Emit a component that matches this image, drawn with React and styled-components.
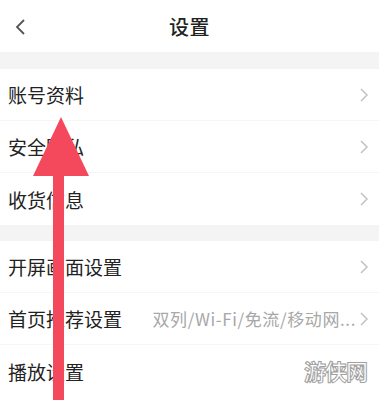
import React from 'react'
import styled, { createGlobalStyle } from 'styled-components'

const GlobalStyle = createGlobalStyle`
  body {
    margin: 0;
    background: #ffffff;
    font-family: "Noto Sans CJK SC", "Noto Sans", sans-serif;
  }
`

const groups = [
  [{ label: '账号资料' }, { label: '安全隐私' }, { label: '收货信息' }],
  [
    { label: '开屏画面设置' },
    { label: '首页推荐设置', value: '双列/Wi-Fi/免流/移动网...' },
    { label: '播放设置' }
  ]
]

const App = () => {
  return (
    <Page>
      <GlobalStyle />
      <Header>
        <BackButton>
          <svg width='14' height='18' viewBox='0 0 14 18'>
            <path d='M11 2 L4 9 L11 16' fill='none' stroke='#555' strokeWidth='1.8' />
          </svg>
        </BackButton>
        <Title>设置</Title>
      </Header>
      {groups.map((group, gi) => (
        <React.Fragment key={gi}>
          <Gap $first={gi === 0} />
          <Group>
            {group.map((item) => (
              <Row key={item.label}>
                <Label>{item.label}</Label>
                <Right>
                  {item.value && <Value>{item.value}</Value>}
                  <svg width='10' height='16' viewBox='0 0 10 16'>
                    <path d='M2 2 L8 8 L2 14' fill='none' stroke='#c2c2c2' strokeWidth='1.5' />
                  </svg>
                </Right>
              </Row>
            ))}
          </Group>
        </React.Fragment>
      ))}
      <Arrow width='379' height='400' viewBox='0 0 379 400'>
        <polygon points='61,117 33,176 89,176' fill='#f4495c' />
        <rect x='53' y='170' width='11' height='240' fill='#f4495c' />
      </Arrow>
      <Watermark>游侠网</Watermark>
    </Page>
  )
}

const Page = styled.div`
  position: relative;
  width: 379px;
  height: 400px;
  overflow: hidden;
  background: #fff;
`

const Header = styled.div`
  position: relative;
  display: flex;
  align-items: center;
  justify-content: center;
  height: 52px;
`

const BackButton = styled.div`
  position: absolute;
  left: 13px;
  top: 18px;
  display: flex;
`

const Title = styled.div`
  font-size: 20px;
  font-weight: 500;
  color: #222;
  letter-spacing: 0.5px;
`

const Gap = styled.div`
  height: ${(p) => (p.$first ? '17px' : '16px')};
  background: #f4f4f4;
`

const Group = styled.div`
  display: flex;
  flex-direction: column;
`

const Row = styled.div`
  display: flex;
  align-items: center;
  justify-content: space-between;
  height: 52px;
  padding: 0 10px 0 8px;
  border-bottom: 1px solid #f6f6f6;
  box-sizing: border-box;
  &:last-child {
    border-bottom: none;
  }
`

const Label = styled.div`
  font-size: 19px;
  color: #222;
`

const Right = styled.div`
  display: flex;
  align-items: center;
  gap: 3px;
`

const Value = styled.div`
  font-size: 17px;
  color: #a8a8a8;
  letter-spacing: 0.6px;
`

const Arrow = styled.svg`
  position: absolute;
  left: 0;
  top: 0;
  pointer-events: none;
`

const Watermark = styled.div`
  position: absolute;
  left: 300px;
  top: 354px;
  padding: 0 4px;
  background: #fff;
  font-size: 22px;
  font-weight: 700;
  color: #fff;
  -webkit-text-stroke: 1px #a0a0a0;
  letter-spacing: -1px;
`

export default App
